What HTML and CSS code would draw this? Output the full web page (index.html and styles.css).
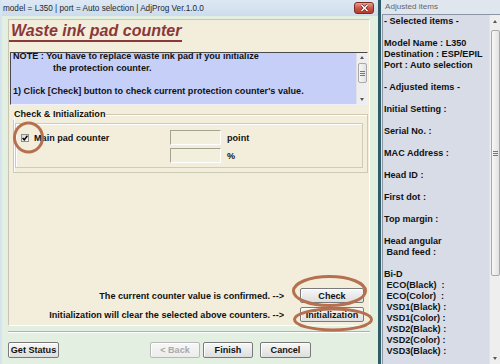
FILE: index.html
```html
<!DOCTYPE html>
<html lang="en">

<head>
    <meta charset="UTF-8" />
    <meta name="viewport" content="width=device-width, initial-scale=1.0" />
    <title>Waste ink pad counter</title>
    <link rel="stylesheet" href="styles.css">
</head>

<body>
    <div class="screen">
        <div class="win">
            <div class="titlebar">
                <span class="title-text">model = L350 | port = Auto selection | AdjProg Ver.1.0.0</span>
                <span class="close-btn">
                    <svg width="9" height="8" viewBox="0 0 9 8">
                        <path d="M1.5 1 L7.5 7 M7.5 1 L1.5 7" stroke="#5a1a12" stroke-width="2.6" />
                        <path d="M1.5 1 L7.5 7 M7.5 1 L1.5 7" stroke="#fff" stroke-width="1.5" />
                    </svg>
                </span>
            </div>
            <div class="win-body">
                <div class="panel">
                    <h1 class="heading">Waste ink pad counter</h1>
                    <!-- 
                        注意事项
                     -->
                    <div class="note">
                        <div class="note-text">NOTE : You have to replace waste ink pad if you initialize<br><span class="indent">the protection counter.</span><br><br>1) Click [Check] button to check current protection counter's value.</div>
                        <div class="vscroll">
                            <span class="arrow up"></span>
                            <span class="thumb"><span class="grip"></span></span>
                            <span class="track"></span>
                            <span class="arrow down"></span>
                        </div>
                    </div>
                    <fieldset class="group">
                        <legend>Check &amp; Initialization</legend>
                        <div class="counter-box">
                            <div class="check-col">
                                <span class="checkbox">
                                    <svg width="6" height="6" viewBox="0 0 6 6">
                                        <path d="M0.6 3 L2.3 4.8 L5.4 0.8" fill="none" stroke="#000" stroke-width="1.4" />
                                    </svg>
                                </span>
                                <span>Main pad counter</span>
                            </div>
                            <div class="fields">
                                <div class="field-row"><span class="field"></span><span>point</span></div>
                                <div class="field-row"><span class="field"></span><span>%</span></div>
                            </div>
                        </div>
                    </fieldset>
                    <div class="actions">
                        <div class="action-row">
                            <span>The current counter value is confirmed. --&gt;</span>
                            <button class="btn">Check</button>
                        </div>
                        <div class="action-row">
                            <span>Initialization will clear the selected above counters. --&gt;</span>
                            <button class="btn">Initialization</button>
                        </div>
                    </div>
                </div>
                <div class="footer">
                    <button class="btn foot-btn">Get Status</button>
                    <button class="btn foot-btn back" disabled>&lt; Back</button>
                    <button class="btn foot-btn finish">Finish</button>
                    <button class="btn foot-btn cancel">Cancel</button>
                </div>
            </div>
        </div>
        <div class="divider"></div>
        <div class="side">
            <div class="side-title">Adjusted items</div>
            <div class="side-list">
<pre class="side-text">- Selected items -

Model Name : L350
Destination : ESP/EPIL
Port : Auto selection

- Adjusted items -

Initial Setting :

Serial No. :

MAC Address :

Head ID :

First dot :

Top margin :

Head angular
 Band feed :

Bi-D
 ECO(Black)  :
 ECO(Color)  :
 VSD1(Black) :
 VSD1(Color) :
 VSD2(Black) :
 VSD2(Color) :
 VSD3(Black) :</pre>
                <div class="vscroll tall">
                    <span class="arrow up"></span>
                    <span class="thumb"><span class="grip"></span></span>
                    <span class="track"></span>
                    <span class="arrow down"></span>
                </div>
            </div>
        </div>
        <!-- 
            标注圈
         -->
        <svg class="marks" width="500" height="364" viewBox="0 0 500 364">
            <ellipse cx="28.5" cy="137.5" rx="14" ry="14.5" />
            <ellipse cx="329.5" cy="291" rx="36" ry="14.5" />
            <ellipse cx="333" cy="319.5" rx="38.5" ry="10.5" />
        </svg>
    </div>
</body>

</html>
```

FILE: styles.css
```css
* {
    margin: 0;
    padding: 0;
    box-sizing: border-box;
}

body {
    width: 500px;
    height: 364px;
    overflow: hidden;
    font-family: "Liberation Sans", Arial, sans-serif;
    color: #111;
}

.screen {
    position: relative;
    display: flex;
    width: 500px;
    height: 364px;
}

/* 
        左侧窗口
    */
.win {
    width: 378px;
    display: flex;
    flex-direction: column;
    background-color: #e2efe1;
    border-left: 2px solid #d6e4f0;
}

.titlebar {
    height: 16px;
    display: flex;
    align-items: center;
    justify-content: space-between;
    padding: 0 4px 0 1px;
    background: linear-gradient(#dde8f4, #cddcec);
}

.title-text {
    font-size: 8.2px;
    color: #1c2833;
}

.close-btn {
    width: 20px;
    height: 12px;
    display: flex;
    align-items: center;
    justify-content: center;
    border: 1px solid #7d2c22;
    border-radius: 3px;
    background: linear-gradient(#e8a295, #c9574a 50%, #b53b2c);
}

.win-body {
    flex: 1;
    display: flex;
    flex-direction: column;
    padding: 3px 8px 0 6px;
}

.panel {
    height: 307px;
    display: flex;
    flex-direction: column;
    padding-bottom: 3px;
    background-color: #f3eedb;
    border: 1px solid #c9c5b2;
    border-right-color: #fff;
    border-bottom-color: #fff;
}

.heading {
    align-self: flex-start;
    margin-top: 2px;
    padding: 0 1px 0 2px;
    font-size: 16px;
    font-style: italic;
    font-weight: bold;
    line-height: 18px;
    color: #8a3838;
    border-bottom: 2px solid #8a3838;
}

/* 
        NOTE 区域
    */
.note {
    height: 53px;
    display: flex;
    margin: 10px 1px 0 1px;
    background-color: #c6cff8;
    border: 1px solid #eef0fb;
    border-top-color: #4a4a4a;
    border-left-color: #4a4a4a;
    overflow: hidden;
}

.note-text {
    flex: 1;
    margin-top: -2px;
    padding-left: 2px;
    font-size: 9.1px;
    font-weight: bold;
    line-height: 11.7px;
}

.indent {
    padding-left: 40px;
}

.vscroll {
    width: 11px;
    display: flex;
    flex-direction: column;
    align-items: center;
    background-color: #eeeeee;
    border-left: 1px solid #e2e2e2;
}

.arrow {
    height: 9px;
    width: 100%;
    display: flex;
    align-items: center;
    justify-content: center;
}

.arrow::before {
    content: "";
    border-left: 2.5px solid transparent;
    border-right: 2.5px solid transparent;
}

.arrow.up::before {
    border-bottom: 3px solid #555;
}

.arrow.down::before {
    border-top: 3px solid #555;
}

.thumb {
    width: 9px;
    height: 20px;
    margin-top: 1px;
    display: flex;
    align-items: center;
    justify-content: center;
    border: 1px solid #a9a9a9;
    border-radius: 2px;
    background: linear-gradient(90deg, #f7f7f7, #e2e2e2);
}

.grip {
    width: 5px;
    height: 5px;
    border-top: 1px solid #777;
    border-bottom: 1px solid #777;
    position: relative;
}

.grip::after {
    content: "";
    position: absolute;
    left: 0;
    right: 0;
    top: 1px;
    border-top: 1px solid #777;
}

.track {
    flex: 1;
}

/* 
        Check & Initialization
    */
.group {
    margin: 4px 1px 0 4px;
    padding: 3px 4px 4px 1px;
    border: 1px solid #cdc9b5;
    box-shadow: inset 1px 1px #fff;
}

.group legend {
    margin-left: -2px;
    padding: 0 1px;
    font-size: 9.1px;
    font-weight: bold;
    line-height: 11px;
}

.counter-box {
    height: 45px;
    display: flex;
    align-items: flex-start;
    padding: 6px 0 0 5px;
    border: 1px solid #cfcbb8;
    box-shadow: inset 1px 1px #fff;
    font-size: 9.1px;
    font-weight: bold;
}

.check-col {
    width: 149px;
    height: 15px;
    display: flex;
    align-items: center;
    gap: 5px;
}

.checkbox {
    width: 8px;
    height: 8px;
    display: flex;
    align-items: center;
    justify-content: center;
    border: 1px solid #8e8f8f;
    background: linear-gradient(135deg, #d8d8d8, #fafafa);
}

.fields {
    display: flex;
    flex-direction: column;
    gap: 3px;
}

.field-row {
    display: flex;
    align-items: center;
    gap: 6px;
}

.field {
    width: 51px;
    height: 15px;
    background-color: #f3efdd;
    border: 1px solid #fff;
    border-top-color: #a7a391;
    border-left-color: #a7a391;
}

.actions {
    margin-top: auto;
    display: flex;
    flex-direction: column;
    align-items: flex-end;
    gap: 4px;
    padding-right: 5px;
}

.action-row {
    display: flex;
    align-items: center;
    gap: 16px;
    font-size: 9.1px;
    font-weight: bold;
}

.btn {
    width: 64px;
    height: 15px;
    font-family: "Liberation Sans", Arial, sans-serif;
    font-size: 9.1px;
    font-weight: bold;
    color: #111;
    border: 1px solid #7a7a7a;
    border-radius: 2px;
    background: linear-gradient(#f7f7f7, #dedede);
    box-shadow: inset 1px 1px #fff;
}

.btn:disabled {
    color: #a8a8a8;
    border-color: #b8b8b8;
    background: linear-gradient(#f7f7f7, #ececec);
}

/* 
        底部按钮
    */
.footer {
    display: flex;
    margin-top: 5px;
    padding-top: 10px;
    border-top: 1px solid #a9b3a9;
    box-shadow: inset 0 1px #fff;
}

.foot-btn {
    width: 51px;
    height: 16px;
}

.back {
    width: 50px;
    margin-left: 91px;
}

.finish {
    width: 50px;
    margin-left: 3px;
}

.cancel {
    margin-left: 7px;
}

.divider {
    width: 3px;
    background-color: #2d5b67;
}

/* 
        右侧面板
    */
.side {
    width: 119px;
    display: flex;
    flex-direction: column;
    background-color: #dfe6ee;
}

.side-title {
    height: 14px;
    padding-left: 4px;
    font-size: 8.1px;
    line-height: 14px;
    color: #666;
}

.side-list {
    flex: 1;
    display: flex;
    margin-left: 1px;
    background-color: #d7dce7;
    border-top: 1px solid #8c95a3;
    border-left: 1px solid #8c95a3;
    overflow: hidden;
}

.side-text {
    flex: 1;
    padding: 1px 0 0 1px;
    font-family: "Liberation Sans", Arial, sans-serif;
    font-size: 9.1px;
    font-weight: bold;
    line-height: 11px;
    color: #111;
}

.vscroll.tall .thumb {
    height: 246px;
    margin-top: 3px;
}

.vscroll.tall .arrow {
    height: 12px;
}

.marks {
    position: absolute;
    left: 0;
    top: 0;
    pointer-events: none;
}

.marks ellipse {
    fill: none;
    stroke: #b5704f;
    stroke-width: 3;
}
```
